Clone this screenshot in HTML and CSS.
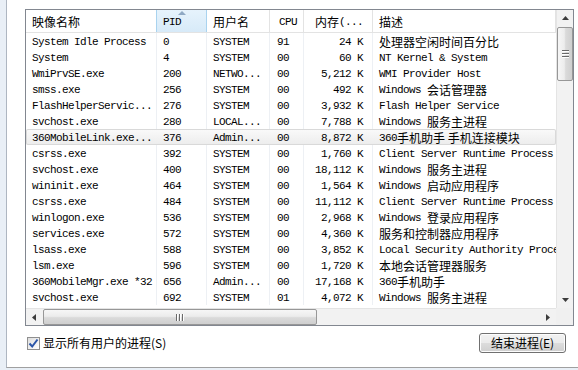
FILE: index.html
```html
<!DOCTYPE html>
<html lang="zh-CN">
<head>
    <meta charset="UTF-8">
    <title>Windows 任务管理器 - 进程</title>
    <link rel="stylesheet" href="styles.css">
</head>
<body>

<div class="window">
    <div class="listbox">
        <div class="view">
            <div class="head">
                <div class="hcell"><span class="zh">映像名称</span></div>
                <div class="hcell sorted">PID<span class="sort-arrow"></span></div>
                <div class="hcell"><span class="zh">用户名</span></div>
                <div class="hcell cpu">CPU</div>
                <div class="hcell num"><span class="zh">内存</span>(...</div>
                <div class="hcell"><span class="zh">描述</span></div>
            </div>

            <div class="row"><span>System Idle Process</span><span>0</span><span>SYSTEM</span><span>91</span><span class="num">24 K</span><span><span class="zh">处理器空闲时间百分比</span></span></div>
            <div class="row"><span>System</span><span>4</span><span>SYSTEM</span><span>00</span><span class="num">60 K</span><span>NT Kernel &amp; System</span></div>
            <div class="row"><span>WmiPrvSE.exe</span><span>200</span><span>NETWO...</span><span>00</span><span class="num">5,212 K</span><span>WMI Provider Host</span></div>
            <div class="row"><span>smss.exe</span><span>256</span><span>SYSTEM</span><span>00</span><span class="num">492 K</span><span>Windows <span class="zh">会话管理器</span></span></div>
            <div class="row"><span>FlashHelperServic...</span><span>276</span><span>SYSTEM</span><span>00</span><span class="num">3,932 K</span><span>Flash Helper Service</span></div>
            <div class="row"><span>svchost.exe</span><span>280</span><span>LOCAL...</span><span>00</span><span class="num">7,788 K</span><span>Windows <span class="zh">服务主进程</span></span></div>
            <div class="row hot"><span>360MobileLink.exe...</span><span>376</span><span>Admin...</span><span>00</span><span class="num">8,872 K</span><span>360<span class="zh">手机助手 手机连接模块</span></span></div>
            <div class="row"><span>csrss.exe</span><span>392</span><span>SYSTEM</span><span>00</span><span class="num">1,760 K</span><span>Client Server Runtime Process</span></div>
            <div class="row"><span>svchost.exe</span><span>400</span><span>SYSTEM</span><span>00</span><span class="num">18,112 K</span><span>Windows <span class="zh">服务主进程</span></span></div>
            <div class="row"><span>wininit.exe</span><span>464</span><span>SYSTEM</span><span>00</span><span class="num">1,564 K</span><span>Windows <span class="zh">启动应用程序</span></span></div>
            <div class="row"><span>csrss.exe</span><span>484</span><span>SYSTEM</span><span>00</span><span class="num">11,112 K</span><span>Client Server Runtime Process</span></div>
            <div class="row"><span>winlogon.exe</span><span>536</span><span>SYSTEM</span><span>00</span><span class="num">2,968 K</span><span>Windows <span class="zh">登录应用程序</span></span></div>
            <div class="row"><span>services.exe</span><span>572</span><span>SYSTEM</span><span>00</span><span class="num">4,360 K</span><span><span class="zh">服务和控制器应用程序</span></span></div>
            <div class="row"><span>lsass.exe</span><span>588</span><span>SYSTEM</span><span>00</span><span class="num">3,852 K</span><span>Local Security Authority Proce</span></div>
            <div class="row"><span>lsm.exe</span><span>596</span><span>SYSTEM</span><span>00</span><span class="num">1,720 K</span><span><span class="zh">本地会话管理器服务</span></span></div>
            <div class="row"><span>360MobileMgr.exe *32</span><span>656</span><span>Admin...</span><span>00</span><span class="num">17,168 K</span><span>360<span class="zh">手机助手</span></span></div>
            <div class="row"><span>svchost.exe</span><span>692</span><span>SYSTEM</span><span>01</span><span class="num">4,072 K</span><span>Windows <span class="zh">服务主进程</span></span></div>
        </div>

        <div class="vscroll">
            <div class="arrow">
                <svg width="7" height="4" viewBox="0 0 7 4"><polygon points="0,4 7,4 3.5,0" fill="#3c3c3c"/></svg>
            </div>
            <div class="vthumb">
                <svg width="7" height="8" viewBox="0 0 7 8">
                    <rect x="0" y="0" width="7" height="1" fill="#6a6a6a"/>
                    <rect x="0" y="1" width="7" height="1" fill="#fff"/>
                    <rect x="0" y="3" width="7" height="1" fill="#6a6a6a"/>
                    <rect x="0" y="4" width="7" height="1" fill="#fff"/>
                    <rect x="0" y="6" width="7" height="1" fill="#6a6a6a"/>
                    <rect x="0" y="7" width="7" height="1" fill="#fff"/>
                </svg>
            </div>
            <div class="track"></div>
            <div class="arrow">
                <svg width="7" height="4" viewBox="0 0 7 4"><polygon points="0,0 7,0 3.5,4" fill="#3c3c3c"/></svg>
            </div>
        </div>

        <div class="hscroll">
            <div class="arrow">
                <svg width="4" height="7" viewBox="0 0 4 7"><polygon points="4,0 4,7 0,3.5" fill="#3c3c3c"/></svg>
            </div>
            <div class="hthumb">
                <svg width="8" height="7" viewBox="0 0 8 7">
                    <rect x="0" y="0" width="1" height="7" fill="#6a6a6a"/>
                    <rect x="1" y="0" width="1" height="7" fill="#fff"/>
                    <rect x="3" y="0" width="1" height="7" fill="#6a6a6a"/>
                    <rect x="4" y="0" width="1" height="7" fill="#fff"/>
                    <rect x="6" y="0" width="1" height="7" fill="#6a6a6a"/>
                    <rect x="7" y="0" width="1" height="7" fill="#fff"/>
                </svg>
            </div>
            <div class="track"></div>
            <div class="arrow">
                <svg width="4" height="7" viewBox="0 0 4 7"><polygon points="0,0 0,7 4,3.5" fill="#3c3c3c"/></svg>
            </div>
        </div>

        <div class="corner"></div>
    </div>

    <div class="footer">
        <label class="check">
            <span class="box">
                <svg width="11" height="11" viewBox="0 0 11 11"><path d="M1.5 5.5 L4.2 8.5 L9.5 1.5" fill="none" stroke="#2b55a8" stroke-width="2"/></svg>
            </span>
            显示所有用户的进程(S)
        </label>
        <button class="btn">结束进程(E)</button>
    </div>
</div>

</body>
</html>
```

FILE: styles.css
```css
body {
    margin: 0;
    background-color: #e9eff6;
    font-family: "Liberation Mono", monospace;
    color: #000;
}

.window {
    margin-left: 6px;
    height: 368px;
    box-sizing: border-box;
    padding: 9px 0 0 18px;
    background-color: #ffffff;
    border-left: 1px solid #aeb6c1;
    border-bottom: 1px solid #a0a0a0;
}

.zh {
    font-family: "Noto Sans CJK SC", sans-serif;
    font-size: 12px;
    letter-spacing: 0;
}

/* list view */

.listbox {
    width: 549px;
    height: 317px;
    box-sizing: border-box;
    border: 1px solid #828790;
    display: grid;
    grid-template-columns: 1fr 17px;
    grid-template-rows: 1fr 17px;
}

.view {
    overflow: hidden;
    font-size: 11px;
    letter-spacing: -0.6px;
}

.head,
.row {
    display: grid;
    grid-template-columns: 131px 50px 63px 34px 69px 1fr;
}

.head {
    height: 23px;
    box-sizing: border-box;
    border-bottom: 1px solid #e3e3e3;
}

.hcell {
    position: relative;
    padding-left: 6px;
    line-height: 24px;
    white-space: nowrap;
    overflow: hidden;
    border-right: 1px solid #e3e3e3;
}

.hcell .zh {
    display: inline-block;
    vertical-align: top;
    line-height: 23px;
}

.hcell.sorted {
    background: linear-gradient(#e6f3fc, #d7eaf8);
    border-left: 1px solid #a9d3ef;
    border-right: 1px solid #a9d3ef;
    margin-left: -1px;
}

.hcell.cpu {
    padding-left: 9px;
}

.hcell.num {
    text-align: right;
    padding-right: 9px;
}

.sort-arrow {
    position: absolute;
    top: 1px;
    left: 50%;
    margin-left: -4px;
    border-left: 4px solid transparent;
    border-right: 4px solid transparent;
    border-bottom: 4px solid #8fa9c4;
}

.row {
    height: 16px;
}

.row > span {
    padding-left: 6px;
    line-height: 19px;
    white-space: nowrap;
    overflow: hidden;
    border-right: 1px solid #edf0f4;
}

.row .zh {
    display: inline-block;
    vertical-align: top;
    line-height: 17px;
}

.row > span:nth-child(4) {
    padding-left: 7px;
}

.row > span.num {
    text-align: right;
    padding-right: 9px;
}

.row > span:last-child {
    border-right: none;
}

.row.hot {
    background: linear-gradient(#fafafa, #ececec);
    box-shadow: inset 0 0 0 1px #d9d9d9;
    border-radius: 2px;
}

.row.hot > span {
    border-right-color: transparent;
}

/* scroll bars */

.vscroll {
    grid-column: 2;
    grid-row: 1;
    display: flex;
    flex-direction: column;
    background-color: #f2f2f2;
    border-left: 1px solid #e4e4e4;
}

.hscroll {
    grid-column: 1;
    grid-row: 2;
    display: flex;
    background-color: #f2f2f2;
    border-top: 1px solid #e4e4e4;
}

.corner {
    grid-column: 2;
    grid-row: 2;
    background-color: #f0f0f0;
}

.arrow {
    flex: 0 0 16px;
    display: flex;
    align-items: center;
    justify-content: center;
}

.vscroll .arrow {
    height: 17px;
}

.track {
    flex: 1;
}

.vthumb {
    height: 54px;
    margin-top: 1px;
    box-sizing: border-box;
    border: 1px solid #979797;
    border-radius: 2px;
    background: linear-gradient(to right, #f6f6f6, #ececec 45%, #dadada 55%, #cfcfcf);
    display: flex;
    align-items: center;
    justify-content: center;
}

.hthumb {
    width: 274px;
    margin-left: 1px;
    box-sizing: border-box;
    border: 1px solid #979797;
    border-radius: 2px;
    background: linear-gradient(#f6f6f6, #ececec 45%, #dadada 55%, #cfcfcf);
    display: flex;
    align-items: center;
    justify-content: center;
}

/* bottom row */

.footer {
    width: 549px;
    display: flex;
    justify-content: space-between;
    align-items: center;
    padding-top: 7px;
}

.check {
    display: flex;
    align-items: center;
    gap: 3px;
    margin-left: 2px;
    font-family: "Noto Sans CJK SC", sans-serif;
    font-size: 12px;
    line-height: 14px;
}

.box {
    width: 13px;
    height: 13px;
    box-sizing: border-box;
    border: 1px solid #8f8f8f;
    background: linear-gradient(135deg, #dedede, #ffffff);
    display: flex;
    align-items: center;
    justify-content: center;
}

.btn {
    width: 87px;
    height: 20px;
    margin-right: 8px;
    padding: 0;
    border: 1px solid #707070;
    border-radius: 3px;
    background: linear-gradient(#f2f2f2, #ebebeb 50%, #dddddd 50%, #cfcfcf);
    box-shadow: inset 0 0 0 1px #fcfcfc;
    font-family: "Noto Sans CJK SC", sans-serif;
    font-size: 12px;
    line-height: 18px;
    color: #000;
}
```
